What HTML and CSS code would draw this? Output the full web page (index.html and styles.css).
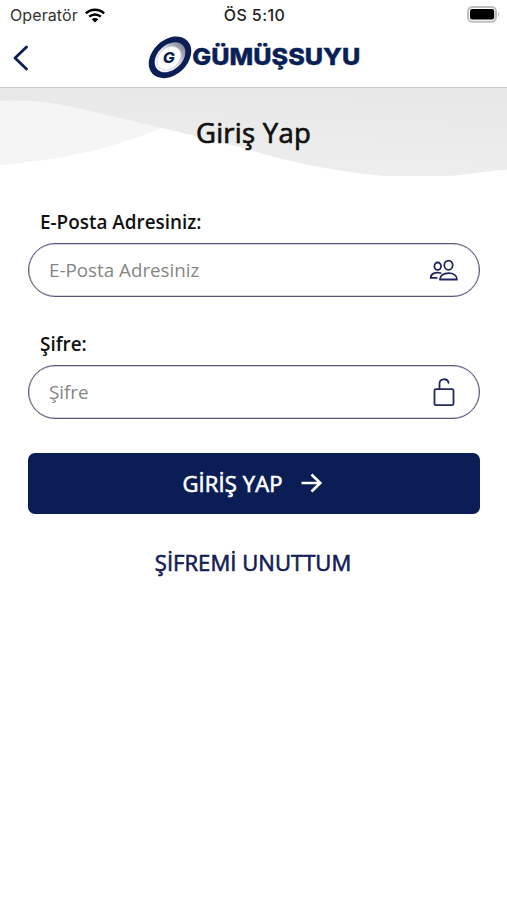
FILE: index.html
```html
<!DOCTYPE html>
<html lang="tr">
<head>
<meta charset="utf-8">
<title>Giriş Yap</title>
<link rel="stylesheet" href="styles.css">
</head>
<body>
<header class="top">
  <div class="status">
    <div class="carrier"><span class="carrier-name">Operatör</span>
      <svg width="20" height="15" viewBox="0 0 20 15"><g fill="none" stroke="#000" stroke-width="2.500"><path d="M.9 5.400C6 .5 14 .5 19.100 5.400"/><path d="M4.200 8.700C7.500 5.600 12.500 5.600 15.800 8.700"/></g><path d="M6.700 11.200q3.300-2.600 6.600 0L10 14.500z"/></svg>
    </div>
    <time class="clock">ÖS 5:10</time>
    <svg class="battery" width="33" height="17" viewBox="0 0 33 17"><rect x="1" y="1" width="28" height="14.800" rx="4.500" fill="#fff" stroke="#bdbdbd" stroke-width="2"/><rect x="3" y="3" width="24.200" height="10.500" rx="2.200"/><path d="M31 6q2 2.300 0 4.600z" fill="#b5b5b5"/></svg>
  </div>
  <nav class="nav">
    <a class="back" href="#"><svg width="18" height="28" viewBox="0 0 18 28"><path d="M14.500 3 3 14l11.500 11" fill="none" stroke="#0b1f55" stroke-width="2.800" stroke-linecap="round" stroke-linejoin="round"/></svg></a>
    <div class="brand">
      <svg width="214" height="46" viewBox="0 0 214 46">
        <defs><linearGradient id="disc" x1="0" y1="0" x2="1" y2="0"><stop offset="0" stop-color="#fff"/><stop offset=".5" stop-color="#dfe1e7"/><stop offset="1" stop-color="#858a98"/></linearGradient></defs>
        <g transform="rotate(-43 22 22.300)">
          <ellipse cx="22" cy="22.300" rx="24" ry="17.600" fill="#0b1f57"/>
          <ellipse cx="22" cy="22.300" rx="17.500" ry="12.400" fill="url(#disc)"/>
          <ellipse cx="20.500" cy="22.300" rx="13.500" ry="10.300" fill="#fff" stroke="#cfd2d9" stroke-width=".8"/>
        </g>
        <text class="emblem" x="14.800" y="27.500" textLength="12" lengthAdjust="spacingAndGlyphs">G</text>
        <text class="wordmark" x="44.300" y="29.800" textLength="168" lengthAdjust="spacingAndGlyphs">GÜMÜŞSUYU</text>
      </svg>
    </div>
  </nav>
</header>
<section class="hero">
  <svg class="waves" width="507" height="92" viewBox="0 0 507 92">
    <defs><linearGradient id="haze" x1="1" y1="0" x2=".8" y2="1"><stop offset="0" stop-color="#e7e7e7"/><stop offset="1" stop-color="#eee"/></linearGradient></defs>
    <path d="M0 0H507V82C485 82 470 88 440 88H385C325 82 285 73 240 59L162 40 0 50z" fill="url(#haze)"/>
    <path d="M0 13C35 11 60 16 90 23L162 40C105 63 60 72 0 77z" fill="#f5f5f5"/>
  </svg>
  <h1 class="title">Giriş Yap</h1>
</section>
<form class="form">
  <label class="label" for="mail">E-Posta Adresiniz:</label>
  <div class="field">
    <input id="mail" class="input" type="text" placeholder="E-Posta Adresiniz">
    <svg width="30" height="24" viewBox="0 0 30 24"><g fill="none" stroke="#20265f" stroke-width="1.800" stroke-linejoin="round" stroke-linecap="round"><ellipse cx="19.500" cy="7.200" rx="4.200" ry="4.600"/><path d="M10.900 21.500c0-4.100 4-6.400 8.600-6.400s8.500 2.300 8.500 6.400z"/><ellipse cx="8.700" cy="8.200" rx="3.300" ry="3.700"/><path d="M11.700 15C6.200 13.600 1.700 15.900 1.700 19.900h6"/></g></svg>
  </div>
  <label class="label" for="pass">Şifre:</label>
  <div class="field">
    <input id="pass" class="input" type="password" placeholder="Şifre">
    <svg width="30" height="30" viewBox="0 0 30 30"><g fill="none" stroke="#20265f" stroke-width="1.800" stroke-linecap="round"><rect x="5.500" y="12.200" width="19" height="16" rx="1.500"/><path d="M10.500 12V6.800C10.500 .9 18.500 1 19.600 5.800"/></g></svg>
  </div>
  <button class="submit" type="button"><span class="submit-text">GİRİŞ YAP</span>
    <svg width="22" height="20" viewBox="0 0 22 20"><path d="M.5 10H19.500M10.500 1.500 19.300 10l-8.800 8.500" fill="none" stroke="#fff" stroke-width="2.600"/></svg>
  </button>
  <a class="forgot" href="#">ŞİFREMİ UNUTTUM</a>
</form>
</body>
</html>
```
FILE: styles.css
```css
* { box-sizing: border-box; }
body { margin: 0; min-height: 900px; background: #fff; color: #111; font-family: "Open Sans", "Noto Sans", sans-serif; }
svg { display: block; flex: none; }
.top { height: 88px; border-bottom: 1px solid #c8c8c8; }
.status { height: 30px; display: grid; grid-template-columns: 1fr auto 1fr; align-items: center; padding: 0 7px 0 10px; font-family: Inter, sans-serif; font-size: 16px; }
.carrier { display: flex; align-items: center; gap: 7px; color: #333; }
.carrier-name { letter-spacing: 0.1px; }
.clock { font-weight: 500; color: #222; letter-spacing: 0.4px; padding-right: 1px; }
.battery { justify-self: end; margin-bottom: 2px; }
.nav { height: 55px; display: grid; grid-template-columns: 1fr auto 1fr; align-items: center; padding: 0 10px 0 12px; }
.brand { grid-column: 2; }
.emblem { font: italic 800 15px Inter, sans-serif; fill: #0b1f57; }
.wordmark { font: 800 23.500px Inter, sans-serif; fill: #0b1f57; stroke: #0b1f57; stroke-width: 0.4px; }
.hero { display: grid; height: 92px; }
.waves, .title { grid-area: 1 / 1; }
.title { margin: 26px 0 0; text-align: center; font-size: 27.500px; line-height: 38px; font-weight: 400; letter-spacing: 0.25px; -webkit-text-stroke: 0.7px currentColor; }
.form { padding: 29px 27px 0 28px; display: flex; flex-direction: column; }
.label { margin-left: 12px; height: 34px; line-height: 26px; font-size: 18.900px; font-weight: 600; }
.field { height: 54px; margin-bottom: 34px; padding: 0 20px; display: flex; align-items: center; border: 1px solid #55567a; border-radius: 27px; box-shadow: inset 0 0 0 0.5px #55567a80; }
.input { flex: 1; min-width: 0; padding: 0; border: 0; outline: 0; background: none; font: 18.800px "Open Sans", sans-serif; }
.input::placeholder { color: #858585; opacity: 1; }
.submit { height: 61px; padding: 0 3px 2px 0; display: flex; align-items: center; justify-content: center; gap: 18px; border: 0; border-radius: 7px; background: #0a1e55; color: #fff; font: 400 22px "Open Sans", sans-serif; }
.submit-text, .forgot { -webkit-text-stroke: 0.6px currentColor; }
.submit-text { letter-spacing: 0.1px; }
.forgot { margin: 33px 2px 0 0; text-align: center; color: #121c55; text-decoration: none; font-size: 22px; line-height: 30px; font-weight: 400; letter-spacing: 0.05px; }
```
